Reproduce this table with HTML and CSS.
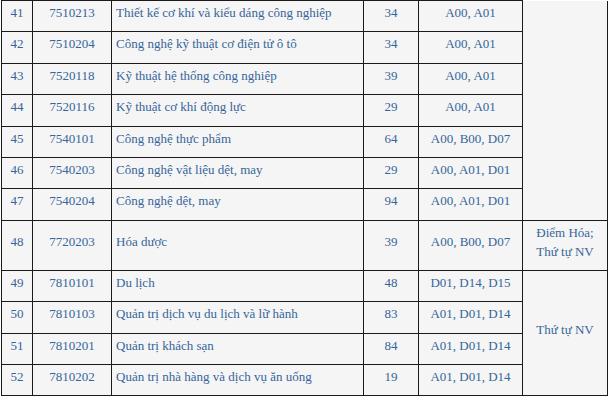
FILE: index.html
```html
<!DOCTYPE html>
<html lang="vi">
<head>
<meta charset="utf-8">
<link rel="stylesheet" href="styles.css">
</head>
<body>
<div class="wrap">
<table class="tbl">
<colgroup>
<col class="c-stt"><col class="c-ma"><col class="c-ten"><col class="c-ct"><col class="c-th"><col class="c-gc">
</colgroup>
<tbody>
<tr><td>41</td><td>7510213</td><td class="l">Thiết kế cơ khí và kiểu dáng công nghiệp</td><td>34</td><td>A00, A01</td><td class="gc top" rowspan="7"></td></tr>
<tr><td>42</td><td>7510204</td><td class="l">Công nghệ kỹ thuật cơ điện tử ô tô</td><td>34</td><td>A00, A01</td></tr>
<tr><td>43</td><td>7520118</td><td class="l">Kỹ thuật hệ thống công nghiệp</td><td>39</td><td>A00, A01</td></tr>
<tr><td>44</td><td>7520116</td><td class="l">Kỹ thuật cơ khí động lực</td><td>29</td><td>A00, A01</td></tr>
<tr><td>45</td><td>7540101</td><td class="l">Công nghệ thực phẩm</td><td>64</td><td>A00, B00, D07</td></tr>
<tr><td>46</td><td>7540203</td><td class="l">Công nghệ vật liệu dệt, may</td><td>29</td><td>A00, A01, D01</td></tr>
<tr><td>47</td><td>7540204</td><td class="l">Công nghệ dệt, may</td><td>94</td><td>A00, A01, D01</td></tr>
<tr><td>48</td><td>7720203</td><td class="l">Hóa dược</td><td>39</td><td>A00, B00, D07</td><td class="gc">Điểm Hóa;<br>Thứ tự NV</td></tr>
<tr><td>49</td><td>7810101</td><td class="l">Du lịch</td><td>48</td><td>D01, D14, D15</td><td class="gc" rowspan="4">Thứ tự NV</td></tr>
<tr><td>50</td><td>7810103</td><td class="l">Quản trị dịch vụ du lịch và lữ hành</td><td>83</td><td>A01, D01, D14</td></tr>
<tr><td>51</td><td>7810201</td><td class="l">Quản trị khách sạn</td><td>84</td><td>A01, D01, D14</td></tr>
<tr><td>52</td><td>7810202</td><td class="l">Quản trị nhà hàng và dịch vụ ăn uống</td><td>19</td><td>A01, D01, D14</td></tr>
</tbody>
</table>
</div>
</body>
</html>
```

FILE: styles.css
```css
html, body {
  margin: 0;
  padding: 0;
  background: #ffffff;
}

.wrap {
  padding: 0 0 0 1px;
}

.tbl {
  border-collapse: collapse;
  table-layout: fixed;
  width: 607px;
  font-size: 13px;
  color: #35659a;
}

.c-stt { width: 31px; }
.c-ma { width: 79px; }
.c-ten { width: 252px; }
.c-ct { width: 55px; }
.c-th { width: 104px; }
.c-gc { width: 85px; }

.tbl td {
  font-family: "Liberation Serif", "Noto Serif", "DejaVu Serif", "Times New Roman", Times, serif;
  border: 1px solid #1a1a1a;
  background: #f5f5f5;
  text-align: center;
  vertical-align: middle;
  line-height: 18.8px;
  padding: 3px 4px 8.6px;
  white-space: nowrap;
  overflow: hidden;
}

.tbl td.l {
  text-align: left;
}

.tbl td.gc {
  white-space: normal;
}

.tbl td.top {
  border-top: none;
}
```
